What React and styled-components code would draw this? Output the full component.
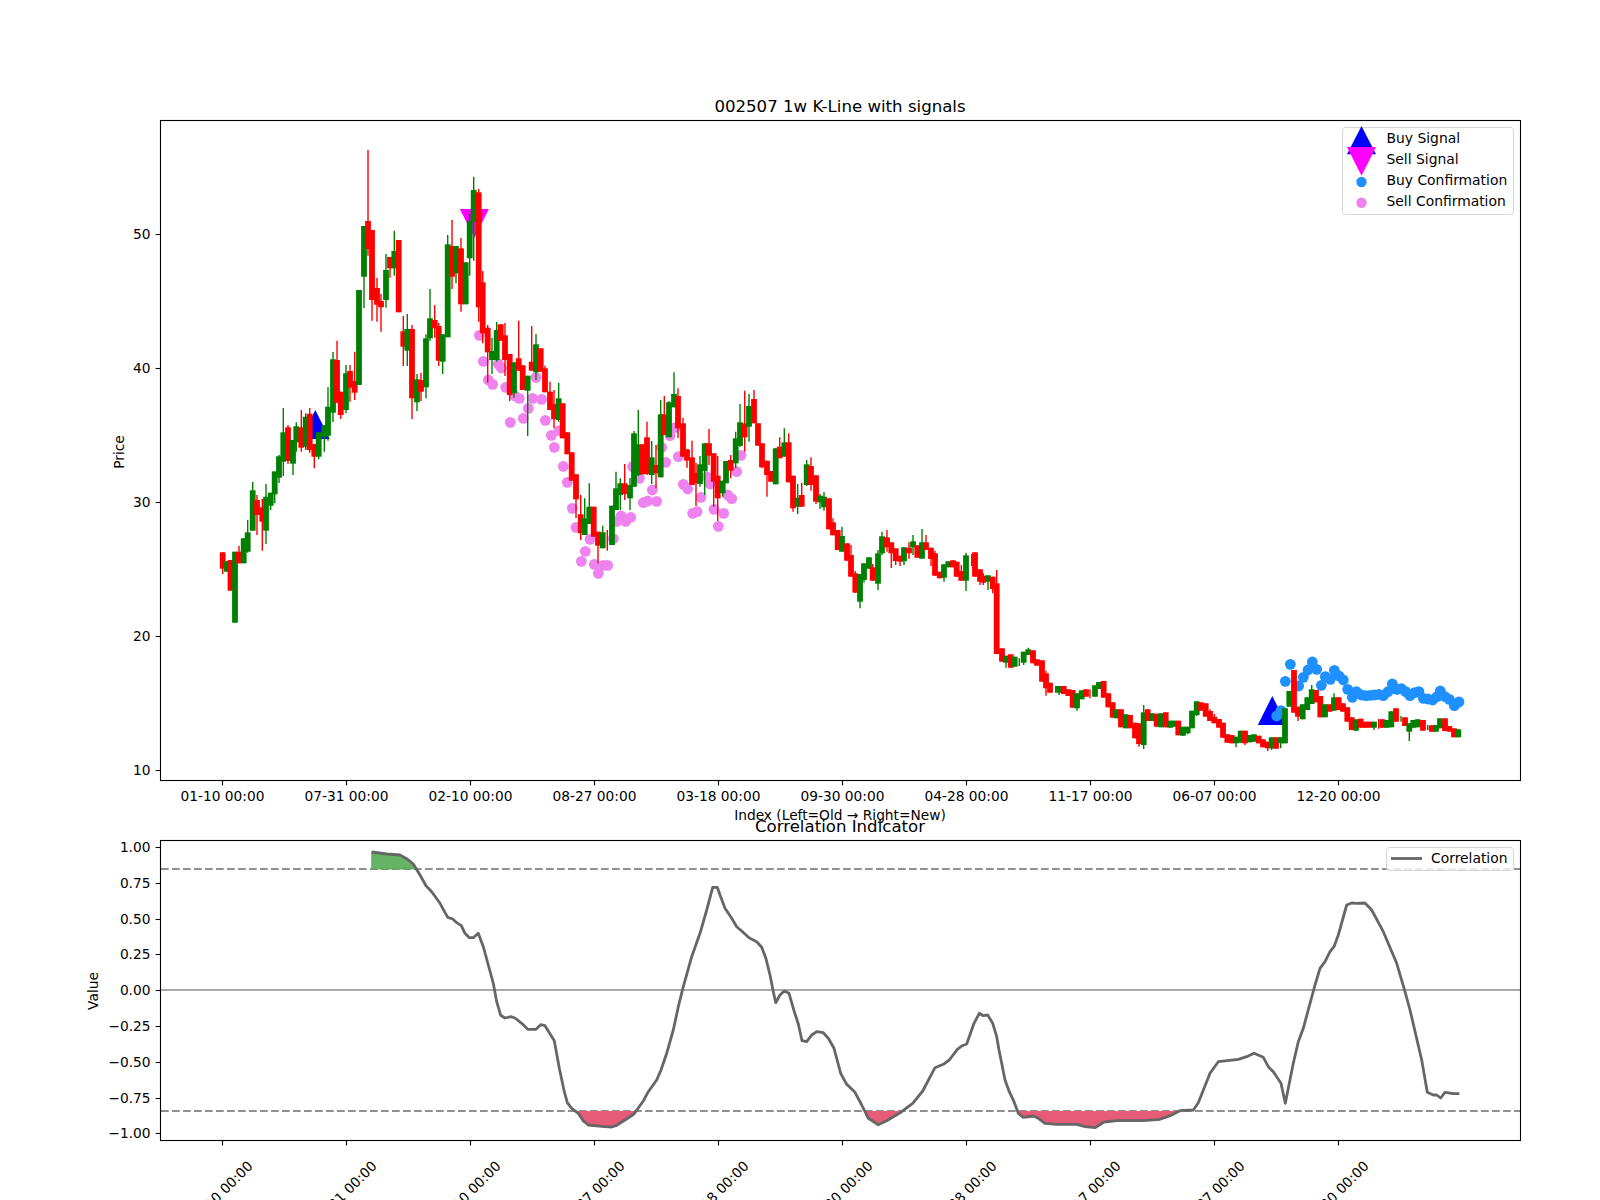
import React from 'react';
import styled, { createGlobalStyle } from 'styled-components';

const GlobalStyle = createGlobalStyle`
  html, body { margin: 0; padding: 0; background: #fff; overflow: hidden; }
  body { font-family: "DejaVu Sans", "Liberation Sans", sans-serif; color: #000; }
`;

const Figure = styled.div`
  width: 1600px; height: 1200px; overflow: hidden; background: #fff;
  padding-top: 96px; box-sizing: border-box;
  display: flex; flex-direction: column; align-items: flex-start;
`;
const PanelTitle = styled.div`
  margin-left: 160px; width: 1360px; height: 24px;
  font-size: 16.6px; line-height: ${p => p.$lh}px; text-align: center; white-space: nowrap;
  flex: none;
`;
const PlotFrame = styled.div`
  position: relative; margin-left: 160px; width: 1360px; height: ${p => p.$h}px;
  margin-bottom: ${p => p.$gap || 0}px; flex: none;
`;
const ChartSvg = styled.svg`
  display: block; width: 100%; height: 100%; overflow: visible;
`;
const TickText = styled.text`
  font-family: "DejaVu Sans", sans-serif; font-size: 13.75px; fill: #000;
`;
const LegendBox = styled.div`
  position: absolute; top: 7px; right: 6.5px; width: ${p => p.$w}px; box-sizing: border-box;
  padding: ${p => p.$pt}px 0 ${p => p.$pb}px; border: 1px solid #d6d6d6; border-radius: 3.5px;
  background: rgba(255,255,255,0.8); font-size: 13.89px;
`;
const LegendRow = styled.div`
  display: grid; grid-template-columns: ${p => p.$icon}px 1fr; align-items: center;
  height: 21px; white-space: nowrap; line-height: 21px;
`;
const LegendIcon = styled.svg`
  display: block; width: 100%; height: 21px; overflow: visible;
`;

const g = 'g', r = 'r';
// x, bodyTop, bodyBottom, wickTop, wickBottom, colour (page pixels read from the chart)
const CANDLES = [
[222.7,552.3,568.7,552.3,574,r],[226.8,561.3,571.7,561.3,571.7,g],[230.5,560,590.7,560,590.7,r],[235,551.7,622.7,551.7,622.7,g],
[239,551.7,563.3,545.7,563.3,r],[243.7,538.3,563.3,538.3,563.3,g],[247.7,532.3,551.7,520,552.7,g],[252.7,490.3,530.7,482,530.7,g],
[257,500,515,495,535,r],[262.3,507.3,521.7,499,550.7,r],[266,496.7,530.7,484,544,g],[270.7,492.7,505.7,492.7,510,g],
[274.7,471.3,494.3,478,503.3,g],[279,456.3,477.7,455,483,g],[283.3,432.3,461.7,408,476,g],[288,427.3,461,425,464,r],
[293,440,463.7,440,475,g],[296.3,426.3,442.3,422.3,451.7,g],[301.3,427.3,447.7,410,451.7,r],[305.7,416.7,446.7,413.3,450,g],
[309.7,413.7,450,408,452.7,r],[314.3,444,456.7,444,468.3,r],[318.7,432.3,456.7,432.3,459.3,g],[324.3,425.3,436.7,425.3,451.7,g],
[328,406.7,435.7,387.3,440.7,g],[333,359.3,412.7,352,422,g],[337,360,402.7,340.7,402.7,r],[340.7,391.7,415,391.7,419,r],
[346,373.3,410,365,413.3,g],[350,371,387.7,365,401.7,r],[354.7,381,392.7,351.7,400,r],[359,290,385,290,385,g],
[364,226,276.7,226,308,g],[368,221,249,150,255.7,r],[372,230,300,230,320.7,r],[377,288,304.7,278,321.7,r],
[381,301,307.3,294,331.7,r],[386,270,300,254,307.7,g],[390,257,268.3,257,277.7,r],[394.3,251,268.3,230.7,275.7,g],
[398.7,240,312.3,240,312.3,r],[403.3,331.3,346.7,316,366,r],[407.3,329,350.7,314,366,g],[412,329,398.3,325,419,r],
[417,379.3,402.3,374,411,g],[421,380,391.7,372.7,401,r],[426,338.3,387.3,334.3,398.3,g],[430,318.3,338.3,289,340.7,g],
[434.7,320,328.3,305,337.7,r],[438.7,326,360.7,323,366,r],[442.7,334.3,361.7,334.3,374,g],[447.7,244.3,337.3,235,337.3,g],
[452,246,276.7,220,289,r],[456,246,273.3,246,283.3,g],[461,248.3,304.3,238,311.7,r],[465.7,262.3,304.3,262.3,304.3,g],
[469.7,220.7,258.3,214,275.7,g],[473.7,190,221.7,176.7,260.7,g],[478.7,192.3,307.3,189,321.7,r],[482.7,282.3,333.3,271,343.3,r],
[487.7,327.7,352.3,325,382.7,r],[492,351,360,337.7,374,g],[496.7,330,360,322,361.7,g],[500.7,324.3,340.7,324.3,340.7,r],
[505,335.3,360,323,376,r],[509.7,354,395,354,401,r],[514,362.3,393.3,362.3,397.7,g],[518.7,358.3,370.7,320.7,370.7,r],
[522.7,365.3,390,365.3,390,r],[527.7,375.7,390.7,375.7,436,g],[531.7,361.7,370.7,326,370.7,r],[536,344.3,372.3,334,380,g],
[540.7,348.3,371.7,348.3,371.7,r],[545,368.3,392.3,365.7,392.3,r],[550,391.7,410,381.7,410,r],[554,404,419.3,390,428.3,r],
[558.7,398.3,420,382.7,421.7,g],[562.7,403.3,438.3,403.3,438.3,r],[567.3,432.3,454.3,432.3,454.3,r],[571.7,452.3,480.7,452.3,480.7,r],
[576,474.3,499.3,474.3,518,r],[580.7,514.3,533.3,495,540,r],[584.7,518.3,535,498.3,535,g],[589.3,506.7,524,483.3,524,g],
[593.7,506.7,536.7,506.7,536.7,r],[598,531.7,545.7,531.7,563.3,r],[602.7,532.3,548.3,525.7,548.3,g],[607.3,530,530,530,550.7,r],
[612,505.7,545,505.7,545,g],[616,488.3,510,471.7,510,g],[620.3,483.3,495,478.3,510,g],[624.7,483.3,494,464,500,r],
[630,485,498.3,478,510,g],[634,433.3,486.7,431,486.7,g],[638.3,444.3,475,410,476,g],[642.7,444.3,474.3,444.3,474.3,r],
[647,437.3,474,421.7,475,r],[651.7,457.3,475,441,484,g],[656,465,473.3,445,488.3,r],[660.7,414.3,477.3,400,477.3,g],
[664.3,414.3,435,396,435,r],[669,402.3,437.3,401,437.3,g],[674,394,407.3,372.3,407.3,g],[678,396,428.3,388.3,438,r],
[683,423.3,456.7,418,456.7,r],[687,449.3,460.7,449.3,467.7,r],[692,457.3,485,440.7,485,r],[696,473,483,463,506,r],
[700,464.3,484,456,486.7,g],[704.7,443.3,471,443.3,495,g],[709,443.3,455.7,429,465,r],[713.7,453.3,481.7,453.3,506.7,r],
[717.7,475.7,498.3,456,521,r],[722.7,480.7,493.3,480.7,496.7,g],[726,461,483.3,461,483.3,g],[730.7,460,470.7,455,478.3,r],
[735.7,438.3,463.3,431.7,468,g],[740,422.3,446,404,446.7,g],[744.7,423.3,437.3,390.7,451.7,r],[749,406,426.7,394,441.7,g],
[754,399,423.3,390,423.3,r],[758,423.3,445.7,423.3,445.7,r],[762,443.3,467.3,443.3,468.3,r],[767,460.7,475,460.7,496.7,r],
[771,471,481.7,471,481.7,r],[775.7,448.3,484.3,448.3,484.3,g],[779.7,446.7,458.3,437.3,458.3,r],[784.3,442.3,456.7,428.3,456.7,g],
[788.7,442.3,482.3,433.3,482.3,r],[793,475.7,508.3,475.7,511.7,r],[797.7,497.7,506.7,484,514,g],[801.7,495,506.7,482.7,506.7,r],
[806.7,464.3,485,460,486,g],[811,466,485,457.3,490.7,r],[816,475.3,501.7,475.3,504,r],[820,495.7,502.3,494,509,g],
[824,496.7,507.3,492,510.7,g],[829,498.3,529.3,498.3,529.3,r],[833,522.3,535.3,518.3,535.3,r],[837.7,530,550,530,550,r],
[842,536,551.7,526.7,551.7,g],[847,543.3,560.7,543.3,560.7,r],[851,555,576.7,545,576.7,r],[855.3,573.3,592.7,571,592.7,r],
[860,574,601.7,574,608.3,g],[864,563.3,580,563.3,582.7,g],[869,557.3,568.7,557.3,568.7,g],[872.7,567.3,580.7,564,580.7,r],
[878,553.3,583.7,550,590,g],[882,536.3,553.3,531.7,555,g],[887,537.3,547.3,530,551.7,r],[891.3,542.3,553.3,542.3,568,r],
[895.7,548.3,561,548.3,565,r],[900,555.7,561.7,555.7,566,r],[904,547.3,561.3,547.3,565,g],[909,547.7,553.3,542.3,559,r],
[913,541.3,547.3,535,555,g],[917.3,545.3,557.7,545.3,557.7,r],[922,542.3,558.7,529,558.7,g],[926,542.3,550,535,550,r],
[931,547.7,559,547.7,566,r],[935,553.3,575.7,550.7,575.7,r],[939.7,571.7,578.3,571.7,578.3,r],[944,564.3,577.7,564.3,581.7,g],
[948.3,561.3,567.3,561.3,567.3,g],[953,560.3,567.3,560.3,567.3,r],[956.7,561.7,576.7,561.7,576.7,r],[961.3,571,580.7,565,580.7,r],
[966,555.3,580.7,552.7,591,g],[971.7,560,560,554,566,g],[975,552.3,576.7,552.3,576.7,r],[980,569.3,581.7,569.3,585,r],
[983.3,575.7,582.7,573.3,585,r],[988,575.3,581.7,575.3,590,g],[992.7,576.7,589,576.7,593.3,r],[996.7,583.3,654,570,654,r],
[1002,648.3,661.7,648.3,661.7,r],[1006,655.7,662.7,655.7,667.7,g],[1010.7,654.3,667.7,654.3,667.7,r],[1014.7,656.7,666.7,656.7,666.7,g],
[1019.3,660,660,658.3,666,g],[1023.7,651.7,662.7,651.7,665,g],[1028.3,649.3,655,647.7,655,g],[1033,650.3,663.3,650.3,663.3,r],
[1037,659.3,665.7,659.3,665.7,r],[1042,660.3,681.7,660.3,681.7,r],[1046,673.3,688.3,670.7,695.7,r],[1050,682.7,692.7,682.7,692.7,r],
[1055.7,688,688,686,692.7,r],[1059,686,692.7,686,695,g],[1063.7,686,694,686,694,r],[1068.3,689.3,696,689.3,696,r],
[1072.7,690,707.7,690,707.7,r],[1077,693.3,708.3,693.3,710.7,g],[1081.7,690.3,699.3,690.3,699.3,g],[1086,689.3,696.7,689.3,696.7,r],
[1090,692,692,689.3,698.3,r],[1095,685.3,696.7,685.3,696.7,g],[1099,682,689,682,689,g],[1103.7,681,697.7,681,697.7,r],
[1108.3,693.3,707.3,693.3,707.3,r],[1112.7,702.3,717.7,702.3,717.7,r],[1116.7,709.3,718.3,709.3,718.3,g],[1121,709.3,727.3,709.3,727.3,r],
[1125.7,714.3,728.3,714.3,728.3,g],[1130,715,728.3,715,728.3,r],[1135,722.7,738.3,722.7,738.3,r],[1139,723.3,744,723.3,746.7,r],
[1143.7,712.3,745,705,749,g],[1147.7,709.3,721,709.3,721,r],[1152,713.3,721,713.3,721,g],[1156.7,713.7,726.7,713.7,726.7,r],
[1161,713.3,727.3,713.3,727.3,g],[1165.7,712.3,727.3,712.3,727.3,r],[1170.3,720.7,727.7,720.7,727.7,g],[1174,720.7,726.7,720.7,726.7,g],
[1178.3,720.7,735.3,720.7,735.3,r],[1183,726.7,735.7,726.7,735.7,g],[1187.7,726.7,733.3,726.7,734.3,g],[1192,710.7,728.3,710.7,728.3,g],
[1196.7,701.3,715,701.3,716,g],[1201,702.3,710.7,702.3,710.7,r],[1205.7,703.3,716.7,703.3,716.7,r],[1210,711,721,709.3,721,r],
[1214.3,716.7,723.3,714,723.3,r],[1219,719,727.7,719,727.7,r],[1223,722.7,737.7,722.7,737.7,r],[1227.3,734.3,742.7,734.3,742.7,r],
[1231.7,735,743.3,735,743.3,r],[1236,736.7,743.3,736.7,747.3,g],[1240.7,730.7,742.7,730.7,742.7,g],[1245,730.7,743.3,730.7,745,r],
[1249.7,735,742.3,735,742.3,g],[1254,734.3,741.7,734.3,741.7,g],[1258.7,735.7,743.3,735.7,743.3,r],[1263,739.3,747.3,739.3,747.3,r],
[1267.7,741.7,748.3,741.7,751,r],[1271.7,737.3,748.3,737.3,750,g],[1276,737.3,748.7,737.3,748.7,r],[1280.7,737.3,743.3,737.3,748.3,g],
[1285,708.3,743.3,708.3,743.3,g],[1289.3,691,706.7,691,706.7,g],[1294,670,712.7,670,712.7,r],[1298,706.7,716.7,706.7,721,r],
[1302.7,704.3,719.3,704.3,719.3,g],[1307.3,697.3,710,697.3,710,g],[1311.7,689.3,704,685,704,g],[1316,690,702.3,690,702.3,r],
[1320.3,696,717.3,696,717.3,r],[1325,704.3,717.3,704.3,717.3,g],[1329.7,704.3,711.7,704.3,711.7,r],[1334,697.3,710.7,693.3,710.7,g],
[1338.7,697.3,710,697.3,710,r],[1343,703.3,711.7,703.3,711.7,r],[1347.3,707.3,721.7,707.3,721.7,r],[1351.7,717.3,730,717.3,730,r],
[1356,719.3,730.7,719.3,730.7,g],[1360.7,718.7,727.7,718.7,727.7,r],[1365,721.7,727.7,721.7,727.7,r],[1369.3,721.7,727.7,721.7,727.7,r],
[1374,721.7,727.7,721.7,730,g],[1378.7,722,722,719,728.7,r],[1382.3,719.3,727.7,719.3,727.7,r],[1386.7,720,727.7,720,727.7,g],
[1391.3,711.3,727.3,711.3,727.3,g],[1396,708.3,721.7,708.3,721.7,r],[1401,718,718,716,721.7,g],[1405,717.3,726,717.3,726,r],
[1409.3,723.3,731.7,723.3,741,g],[1413.3,720,727.7,720,727.7,g],[1417.7,719.3,727.3,719.3,727.3,g],[1423,720,730.7,720,730.7,r],
[1427.7,727,727,725,730,g],[1431.7,725.3,731.7,725.3,731.7,r],[1436,725,731.7,725,731.7,g],[1440,718.3,728.3,718.3,728.3,g],
[1445,718.3,731,718.3,731,r],[1449.3,726,731.7,726,731.7,r],[1454,728.3,737.3,728.3,737.3,r],[1458.3,729.3,737.3,729.3,737.3,g],
];

const zoomed = (ox, oy, arr) => arr.map(([x, y]) => [ox + x / 3, oy + y / 3]);

const PINK = [
  ...zoomed(400, 180, [[238,466],[250,544],[295,552],[304,564],[265,600],[278,613],[317,622],[345,648],[358,655],[398,655],[425,658],[385,685],[370,715],[331,727],[436,721],[408,592]]),
  ...zoomed(550, 360, [[4,226],[13,262],[28,212],[40,319],[52,367],[67,445],[78,502],[120,538],[106,574],[94,604],[133,613],[160,616],[173,616],[145,640],[190,536],[200,484],[213,468],[227,484],[242,472],[280,428],[293,423],[320,424],[307,390],[268,355],[248,320],[347,307],[335,262],[360,227],[375,203],[385,290],[400,373],[413,387],[453,412],[428,460],[441,455],[492,448],[521,460],[505,499],[533,405],[545,416],[560,335],[573,286],[480,372],[470,350]]),
];
const BLUE = zoomed(1180, 640, [[290,228],[303,212],[331,73],[316,124],[356,138],[370,112],[384,90],[397,66],[410,88],[424,136],[436,110],[451,118],[463,91],[477,108],[490,120],[503,148],[517,172],[529,155],[544,165],[557,167],[571,166],[584,165],[597,163],[610,167],[624,155],[637,132],[651,148],[664,146],[677,155],[690,167],[704,158],[717,155],[730,175],[744,177],[758,180],[771,170],[781,153],[795,170],[808,178],[823,197],[837,186]]);

const CORR = [
  ...zoomed(150, 770, [[665,246],[710,252],[750,255],[770,266],[790,282],[810,315],[828,347],[845,365],[870,400],[893,442],[908,447],[920,458],[934,467],[945,490],[958,503],[970,503],[985,490],[1000,530],[1015,585],[1030,640],[1040,695],[1052,736],[1065,744],[1082,740],[1095,744],[1115,760],[1133,778],[1158,778],[1172,764],[1185,767],[1213,812],[1228,895],[1243,965],[1252,998],[1265,1015],[1285,1030],[1300,1053],[1315,1065],[1355,1069],[1385,1071],[1400,1066],[1425,1050],[1452,1032],[1480,993]]),
  ...zoomed(600, 860, [[145,695],[170,660],[183,630],[200,580],[220,510],[235,440],[250,380],[275,290],[300,220],[320,150],[338,82],[352,82],[360,105],[375,145],[395,175],[410,200],[425,213],[447,233],[470,245],[485,262],[497,293],[510,345],[520,395],[527,428],[540,405],[553,393],[567,400],[583,455],[595,492],[606,542],[620,545],[635,525],[650,515],[670,518],[685,535],[702,565],[722,640],[740,673],[765,697],[785,735],[805,775],[835,794],[860,782],[905,755],[938,730],[968,693],[1005,623],[1030,613],[1048,600],[1072,568],[1087,557],[1100,552],[1122,490],[1138,460],[1150,467],[1163,465],[1178,490],[1190,530],[1197,570]]),
  ...zoomed(1000, 860, [[5,610],[15,660],[28,695],[42,725],[55,760],[70,772],[100,768],[115,775],[135,790],[170,793],[230,793],[255,800],[285,803],[312,786],[350,782],[430,782],[480,778],[510,767],[540,752],[580,750],[595,728],[630,640],[655,605],[715,598],[740,590],[762,580],[790,592],[805,620],[820,635],[843,670],[856,730],[880,610],[895,545],[910,505],[945,375],[960,325],[975,305],[990,275],[1002,260],[1015,225],[1040,135],[1055,129],[1070,130],[1095,129],[1115,150],[1150,215],[1190,310],[1215,395],[1230,450],[1265,600],[1282,697],[1300,705],[1310,705],[1322,714],[1335,697],[1360,701],[1378,701]]),
];

const polys = (pts, thr, above) => {
  const out = []; let cur = null;
  const inside = p => (above ? p[1] < thr : p[1] > thr);
  pts.forEach((p, i) => {
    const q = pts[i - 1];
    if (inside(p)) {
      if (!cur) {
        cur = [];
        if (q) cur.push([q[0] + (p[0] - q[0]) * (thr - q[1]) / (p[1] - q[1]), thr]);
        else cur.push([p[0], thr]);
      }
      cur.push(p);
    } else if (cur) {
      cur.push([q[0] + (p[0] - q[0]) * (thr - q[1]) / (p[1] - q[1]), thr]);
      out.push(cur); cur = null;
    }
  });
  if (cur) out.push(cur);
  return out;
};
const toPts = pts => pts.map(p => p.map(v => v.toFixed(1)).join(',')).join(' ');

const X_LABELS = ['01-10 00:00','07-31 00:00','02-10 00:00','08-27 00:00','03-18 00:00','09-30 00:00','04-28 00:00','11-17 00:00','06-07 00:00','12-20 00:00'];
const tickX = i => Math.round(222.7 + 124 * i - 0.5) + 0.5;

const PRICE_TICKS = [[50,234.5],[40,368.5],[30,502.5],[20,636.5],[10,770.5]];
const VALUE_TICKS = ['1.00','0.75','0.50','0.25','0.00','−0.25','−0.50','−0.75','−1.00'].map((t, i) => [t, Math.round(847 + i * 35.8) + 0.5]);

const Axes = ({ x, y, w, h, yTicks }) => (
  <>
    <rect x={x} y={y} width={w} height={h} fill="none" stroke="#000" strokeWidth="1.1" />
    {X_LABELS.map((_, i) => <line key={i} x1={tickX(i)} x2={tickX(i)} y1={y + h} y2={y + h + 4.9} stroke="#000" strokeWidth="1.1" />)}
    {yTicks.map(([t, ty]) => (
      <React.Fragment key={t}>
        <line x1={x} x2={x - 4.9} y1={ty} y2={ty} stroke="#000" strokeWidth="1.1" />
        <TickText x={150.5} y={ty + 4.3} textAnchor="end">{t}</TickText>
      </React.Fragment>
    ))}
  </>
);

const Triangle = ({ x, y, down, color }) => (
  <polygon points={down ? `${x - 14.5},${y} ${x + 14.5},${y} ${x},${y + 29}` : `${x},${y} ${x + 14.5},${y + 29} ${x - 14.5},${y + 29}`} fill={color} />
);

const Candle = ({ c: [x, t, b, wt, wb, col] }) => {
  const fill = col === 'g' ? '#008000' : '#ff0000';
  return (
    <>
      <line x1={x} x2={x} y1={wt} y2={wb} stroke={fill} strokeWidth="1.4" />
      {b > t && <rect x={x - 2.9} y={t} width={5.8} height={b - t} fill={fill} />}
    </>
  );
};

const LegendMark = ({ children }) => <LegendIcon>{children}</LegendIcon>;

const PriceChart = () => (
  <PlotFrame $h={660} $gap={36}>
    <ChartSvg viewBox="160 120 1360 660">
      <Triangle x={315.3} y={410} color="#0000ff" />
      <Triangle x={1272.3} y={696} color="#0000ff" />
      <Triangle x={474.4} y={209} down color="#ff00ff" />
      {PINK.map(([x, y], i) => <circle key={i} cx={x} cy={y} r="5.4" fill="#ee82ee" />)}
      {BLUE.map(([x, y], i) => <circle key={i} cx={x} cy={y} r="5.4" fill="#1e90ff" />)}
      {CANDLES.map((c, i) => <Candle key={i} c={c} />)}
      <Axes x={160.5} y={120.5} w={1360} h={660} yTicks={PRICE_TICKS} />
      {X_LABELS.map((t, i) => <TickText key={t} x={tickX(i)} y={801} textAnchor="middle">{t}</TickText>)}
      <TickText x={840} y={820} textAnchor="middle">Index (Left=Old → Right=New)</TickText>
      <TickText transform="translate(124 452) rotate(-90)" textAnchor="middle">Price</TickText>
    </ChartSvg>
    <LegendBox $w={171.5} $pt={0} $pb={2.4}>
      <LegendRow $icon={43.5}>
        <LegendMark><polygon points="18.5,-2 33,26.3 4,26.3" fill="#0000ff" /></LegendMark>
        <span>Buy Signal</span>
      </LegendRow>
      <LegendRow $icon={43.5}>
        <LegendMark><polygon points="4,-2 33,-2 18.5,26.7" fill="#ff00ff" /></LegendMark>
        <span>Sell Signal</span>
      </LegendRow>
      <LegendRow $icon={43.5}>
        <LegendMark><circle cx="18.5" cy="12" r="5.2" fill="#1e90ff" /></LegendMark>
        <span>Buy Confirmation</span>
      </LegendRow>
      <LegendRow $icon={43.5}>
        <LegendMark><circle cx="18.5" cy="11.7" r="5.2" fill="#ee82ee" /></LegendMark>
        <span>Sell Confirmation</span>
      </LegendRow>
    </LegendBox>
  </PlotFrame>
);

const CorrelationChart = () => (
  <PlotFrame $h={300}>
    <ChartSvg viewBox="160 840 1360 300">
      <line x1="161" x2="1520" y1="990" y2="990" stroke="#a9a9a9" strokeWidth="2" />
      <line x1="161" x2="1520" y1="869" y2="869" stroke="#8f8f8f" strokeWidth="2" strokeDasharray="7.7 3.3" />
      <line x1="161" x2="1520" y1="1111" y2="1111" stroke="#8f8f8f" strokeWidth="2" strokeDasharray="7.7 3.3" />
      {polys(CORR, 869, true).map((p, i) => <polygon key={i} points={toPts(p)} fill="#66b366" stroke="#52a852" strokeWidth="0.8" />)}
      {polys(CORR, 1111, false).map((p, i) => <polygon key={i} points={toPts(p)} fill="#e65b77" />)}
      <polyline points={toPts(CORR)} fill="none" stroke="#666" strokeWidth="2.8" strokeLinejoin="round" />
      <Axes x={160.5} y={840.5} w={1360} h={300} yTicks={VALUE_TICKS} />
      {X_LABELS.map((t, i) => <TickText key={t} transform={`translate(${tickX(i) + 1.5} 1196.5) rotate(-45)`} textAnchor="middle">{t}</TickText>)}
      <TickText transform="translate(98 991) rotate(-90)" textAnchor="middle">Value</TickText>
    </ChartSvg>
    <LegendBox $w={127.5} $pt={0} $pb={1.4}>
      <LegendRow $icon={44}>
        <LegendMark><line x1="4" x2="35" y1="10.5" y2="10.5" stroke="#666" strokeWidth="2.8" /></LegendMark>
        <span>Correlation</span>
      </LegendRow>
    </LegendBox>
  </PlotFrame>
);

export default function App() {
  return (
    <>
      <GlobalStyle />
      <Figure>
        <PanelTitle $lh={22}>002507 1w K-Line with signals</PanelTitle>
        <PriceChart />
        <PanelTitle $lh={21}>Correlation Indicator</PanelTitle>
        <CorrelationChart />
      </Figure>
    </>
  );
}
